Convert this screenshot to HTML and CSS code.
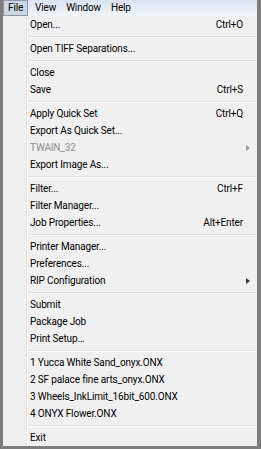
FILE: index.html
```html
<!DOCTYPE html>
<html lang="en">
<head>
  <meta charset="UTF-8">
  <title>File menu</title>
  <link rel="stylesheet" href="styles.css">
</head>
<body>
  <div class="frame">
    <!-- menu bar -->
    <div class="menubar">
      <span class="bar-item open">File</span>
      <span class="bar-item">View</span>
      <span class="bar-item">Window</span>
      <span class="bar-item">Help</span>
    </div>

    <!-- drop down -->
    <div class="menu">
      <div class="item"><span>Open...</span><span class="key">Ctrl+O</span></div>
      <div class="sep"></div>
      <div class="item"><span>Open TIFF Separations...</span></div>
      <div class="sep"></div>
      <div class="item"><span>Close</span></div>
      <div class="item"><span>Save</span><span class="key">Ctrl+S</span></div>
      <div class="sep"></div>
      <div class="item"><span>Apply Quick Set</span><span class="key">Ctrl+Q</span></div>
      <div class="item"><span>Export As Quick Set...</span></div>
      <div class="item disabled"><span>TWAIN_32</span><span class="arrow"></span></div>
      <div class="item"><span>Export Image As...</span></div>
      <div class="sep"></div>
      <div class="item"><span>Filter...</span><span class="key">Ctrl+F</span></div>
      <div class="item"><span>Filter Manager...</span></div>
      <div class="item"><span>Job Properties...</span><span class="key">Alt+Enter</span></div>
      <div class="sep"></div>
      <div class="item"><span>Printer Manager...</span></div>
      <div class="item"><span>Preferences...</span></div>
      <div class="item"><span>RIP Configuration</span><span class="arrow"></span></div>
      <div class="sep"></div>
      <div class="item"><span>Submit</span></div>
      <div class="item"><span>Package Job</span></div>
      <div class="item"><span>Print Setup...</span></div>
      <div class="sep"></div>
      <div class="item"><span>1 Yucca White Sand_onyx.ONX</span></div>
      <div class="item"><span>2 SF palace fine arts_onyx.ONX</span></div>
      <div class="item"><span>3 Wheels_InkLimit_16bit_600.ONX</span></div>
      <div class="item"><span>4 ONYX Flower.ONX</span></div>
      <div class="sep"></div>
      <div class="item"><span>Exit</span></div>
    </div>
  </div>
</body>
</html>
```

FILE: styles.css
```css
body {
  margin: 0;
  padding: 0;
  font-family: Roboto, "Liberation Sans", sans-serif;
  font-size: 10px;
  letter-spacing: -0.15px;
  color: #000;
}
.frame {
  width: 261px;
  height: 449px;
  box-sizing: border-box;
  padding: 0 4px 3px 3px;
  background: #7d7d7d;
  display: flex;
  flex-direction: column;
}

.menubar {
  height: 16px;
  flex: none;
  display: flex;
  align-items: center;
  background: linear-gradient(#dbe3f1, #f1f4f9);
}
.bar-item {
  padding: 0 5px;
  line-height: 14px;
}
.bar-item.open {
  border: 1px solid #8a97a8;
  background: #cdd6e3;
  padding: 0 4px;
  margin-right: 2px;
}

.menu {
  flex: 1;
  background: #f0f0f0;
  position: relative;
  overflow: hidden;
}
/* icon gutter line */
.menu::before {
  content: "";
  position: absolute;
  left: 23px;
  top: 0;
  bottom: 0;
  width: 1px;
  background: #e2e3e3;
  border-right: 1px solid #fff;
}

.item {
  height: 17px;
  display: flex;
  align-items: center;
  justify-content: space-between;
  padding: 0 10px 0 27px;
  white-space: nowrap;
}
.item.disabled {
  color: #8d8d8d;
}
.key {
  padding-right: 4px;
}
.arrow {
  width: 0;
  height: 0;
  border-left: 4px solid #333;
  border-top: 3.5px solid transparent;
  border-bottom: 3.5px solid transparent;
  margin-right: -3px;
}
.disabled .arrow {
  border-left-color: #9a9a9a;
}

.sep {
  height: 7px;
  margin-left: 25px;
  background: linear-gradient(transparent 3px, #e0e0e0 3px, #e0e0e0 4px, #fff 4px, #fff 5px, transparent 5px);
}
```
